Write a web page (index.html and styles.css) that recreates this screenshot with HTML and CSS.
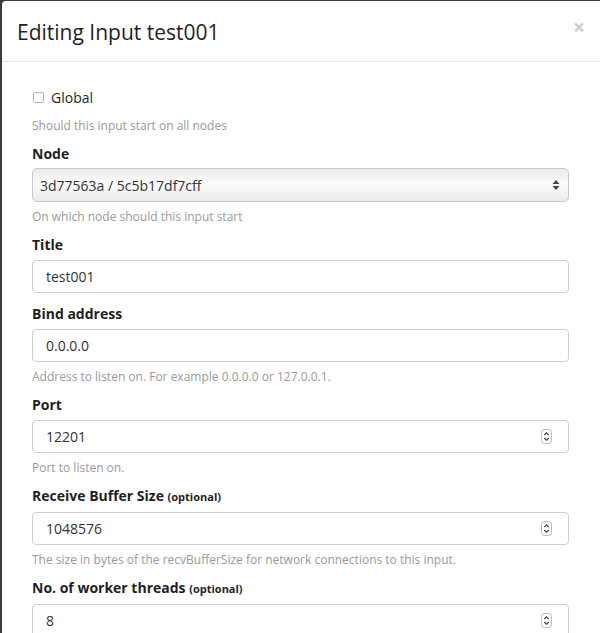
FILE: index.html
```html
<!DOCTYPE html>
<html>
<head>
<meta charset="utf-8">
<link rel="stylesheet" href="styles.css">
</head>
<body>
<div class="modal">
  <div class="modal-header">
    <h4 class="modal-title">Editing Input test001</h4>
    <span class="close">×</span>
  </div>
  <div class="modal-body">
    <div class="form-group form-group-first">
      <label class="check-row"><span class="checkbox"></span><span class="check-label">Global</span></label>
      <div class="help help-first">Should this input start on all nodes</div>
    </div>
    <div class="form-group">
      <label class="label label-select">Node</label>
      <div class="select">
        <span>3d77563a / 5c5b17df7cff</span>
        <svg class="select-arrows" width="8" height="12" viewBox="0 0 8 12"><path d="M4 1 L7.5 5 H0.5 Z M4 11 L0.5 7 H7.5 Z" fill="#444"/></svg>
      </div>
      <div class="help">On which node should this input start</div>
    </div>
    <div class="form-group form-group-plain">
      <label class="label">Title</label>
      <div class="input">test001</div>
    </div>
    <div class="form-group">
      <label class="label">Bind address</label>
      <div class="input">0.0.0.0</div>
      <div class="help">Address to listen on. For example 0.0.0.0 or 127.0.0.1.</div>
    </div>
    <div class="form-group">
      <label class="label">Port</label>
      <div class="input input-number"><span>12201</span>
        <svg class="spinner" width="11" height="15" viewBox="0 0 11 15"><rect x="0.5" y="0.5" width="10" height="14" rx="3" fill="#fff" stroke="#bbb"/><path d="M3.3 6 L5.5 3.8 L7.7 6 M3.3 9 L5.5 11.2 L7.7 9" fill="none" stroke="#444" stroke-width="1.2"/></svg>
      </div>
      <div class="help">Port to listen on.</div>
    </div>
    <div class="form-group">
      <label class="label">Receive Buffer Size <small class="optional">(optional)</small></label>
      <div class="input input-number"><span>1048576</span>
        <svg class="spinner" width="11" height="15" viewBox="0 0 11 15"><rect x="0.5" y="0.5" width="10" height="14" rx="3" fill="#fff" stroke="#bbb"/><path d="M3.3 6 L5.5 3.8 L7.7 6 M3.3 9 L5.5 11.2 L7.7 9" fill="none" stroke="#444" stroke-width="1.2"/></svg>
      </div>
      <div class="help">The size in bytes of the recvBufferSize for network connections to this input.</div>
    </div>
    <div class="form-group form-group-plain">
      <label class="label">No. of worker threads <small class="optional">(optional)</small></label>
      <div class="input input-number"><span>8</span>
        <svg class="spinner" width="11" height="15" viewBox="0 0 11 15"><rect x="0.5" y="0.5" width="10" height="14" rx="3" fill="#fff" stroke="#bbb"/><path d="M3.3 6 L5.5 3.8 L7.7 6 M3.3 9 L5.5 11.2 L7.7 9" fill="none" stroke="#444" stroke-width="1.2"/></svg>
      </div>
    </div>
  </div>
</div>
</body>
</html>
```
FILE: styles.css
```css
html, body {
  margin: 0;
  padding: 0;
  height: 100%;
  overflow: hidden;
}
body {
  background: #3b3b3b;
  font-family: "Open Sans", "DejaVu Sans", sans-serif;
  color: #1f1f1f;
  padding: 1px 0 0 2px;
  box-sizing: border-box;
}
.modal {
  background: #fff;
  border-radius: 4px 4px 0 0;
  width: 620px;
  height: 640px;
}
.modal-header {
  height: 60px;
  border-bottom: 1px solid #e5e5e5;
  display: flex;
  align-items: center;
  padding: 0 15px;
  position: relative;
}
.modal-title {
  margin: 0;
  font-size: 21px;
  font-weight: 400;
  line-height: 30px;
  color: #1f1f1f;
  padding-top: 2px;
}
.close {
  position: absolute;
  left: 571px;
  top: 16px;
  font-size: 21px;
  font-weight: 700;
  line-height: 21px;
  color: #000;
  opacity: 0.2;
}
.modal-body {
  padding: 25px 48px 0 30px;
}
.form-group {
  margin-bottom: 9px;
  width: 537px;
}
.form-group-first {
  margin-bottom: 8px;
}
.form-group-plain {
  margin-bottom: 10px;
}
.check-row {
  display: flex;
  align-items: center;
  height: 20px;
}
.checkbox {
  width: 11px;
  height: 11px;
  border: 1px solid #b5b5b5;
  border-radius: 2px;
  box-sizing: border-box;
  margin: 0 7px 0 1px;
}
.check-label {
  font-size: 14px;
  color: #1f1f1f;
}
.label {
  display: block;
  font-size: 14px;
  font-weight: 700;
  line-height: 20px;
  padding-top: 1px;
  margin-bottom: 5px;
  color: #1f1f1f;
}
.label-select {
  padding-top: 2px;
  margin-bottom: 4px;
}
.optional {
  font-size: 11px;
  font-weight: 700;
}
.select {
  height: 34px;
  box-sizing: border-box;
  border: 1px solid #c8c8c8;
  border-radius: 5px;
  background: linear-gradient(#ebebeb, #fbfbfb 45%, #ebebeb);
  display: flex;
  align-items: center;
  justify-content: space-between;
  padding: 0 8px 0 7px;
  font-size: 14px;
  color: #333;
}
.input {
  height: 33px;
  box-sizing: border-box;
  border: 1px solid #cfcfcf;
  border-radius: 4px;
  display: flex;
  align-items: center;
  padding: 0 13px;
  font-size: 14px;
  color: #333;
}
.input-number {
  justify-content: space-between;
  padding-right: 16px;
}
.help {
  font-size: 12px;
  line-height: 17px;
  margin-top: 6px;
  color: #9a9a9a;
}
.help-first {
  margin-top: 10px;
}
```
